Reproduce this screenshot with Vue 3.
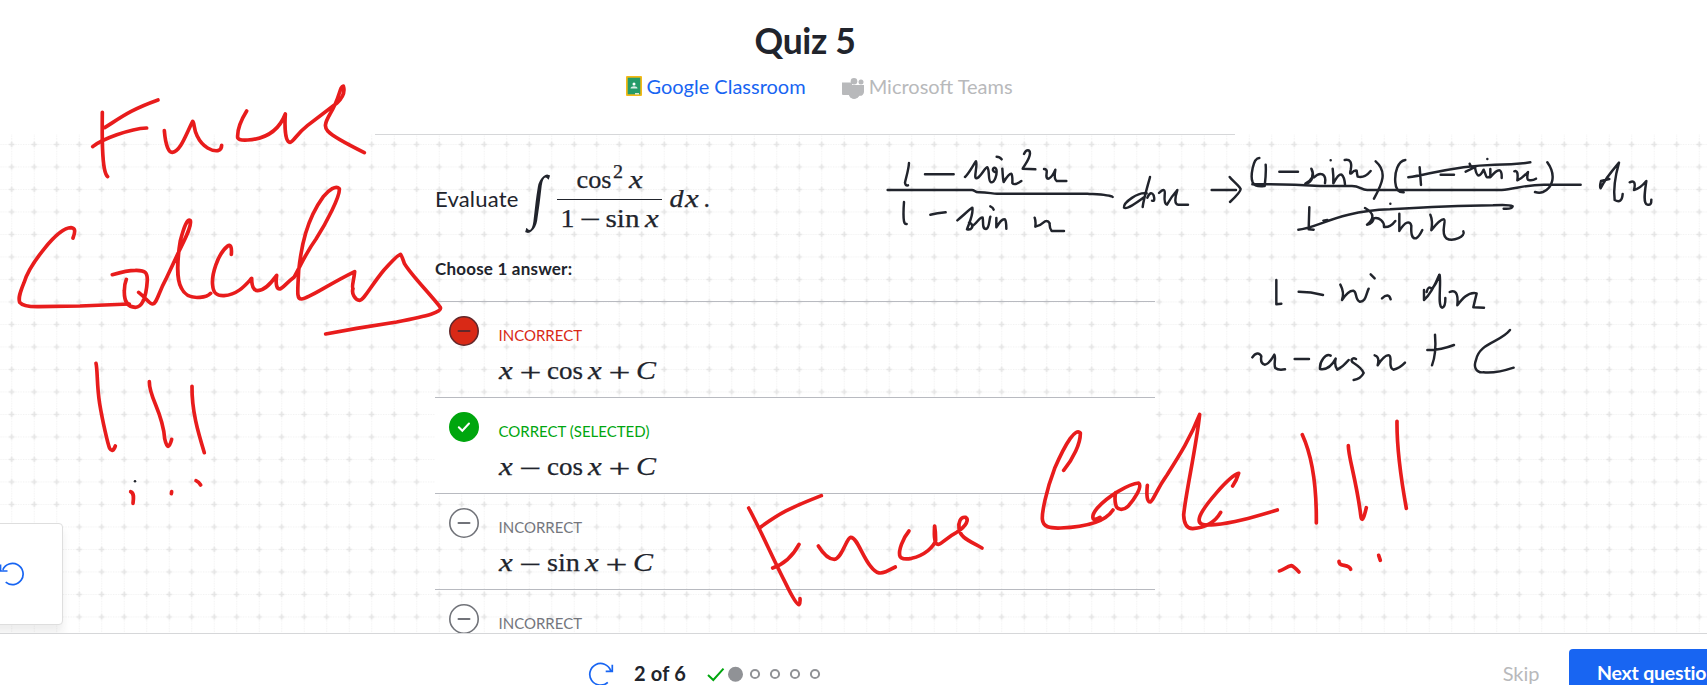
<script setup>
const x = (at, base, size = 26) => ({ t: 'x', at, w: size * 0.53, base, i: true, size })

const incorrect = 'INCORRECT'
const tail = (shift = 0) => [
  x(89 - shift, 25),
  { t: '+', at: 109.5 - shift, w: 22, base: 27 },
  { t: 'C', at: 137 - shift, w: 20, base: 25, i: true },
]
const answers = [
  {
    state: 'wrong',
    label: incorrect,
    terms: [x(0, 25), { t: '+', at: 20.5, w: 22, base: 27 }, { t: 'cos', at: 48, w: 36, base: 25 }, ...tail()],
  },
  {
    state: 'right',
    label: 'CORRECT (SELECTED)',
    terms: [x(0, 25), { t: '−', at: 20.5, w: 22, base: 27 }, { t: 'cos', at: 48, w: 36, base: 25 }, ...tail()],
  },
  {
    state: 'plain',
    label: incorrect,
    terms: [x(0, 25), { t: '−', at: 20.5, w: 22, base: 27 }, { t: 'sin', at: 48, w: 33, base: 25 }, ...tail(3)],
  },
  { state: 'plain', label: incorrect, terms: [] },
]

const integrand = [
  { t: 'cos', at: 51.5, w: 35, base: 28 },
  { t: '2', at: 88, w: 10, base: 18, size: 18 },
  x(104, 28),
  { t: '1', at: 35.5, w: 14, base: 67 },
  { t: '−', at: 55, w: 21, base: 68 },
  { t: 'sin', at: 80.5, w: 34, base: 67 },
  x(120, 67),
  { t: 'd', at: 144.5, w: 14, base: 46.5, i: true },
  x(160, 46.5),
  { t: '.', at: 178.5, w: 6.5, base: 46.5 },
]

const sketches = [
  {
    ink: 'red',
    move: 'translate(0 60) scale(.33333)',
    lines: [
      'M307 157C306 230 305 285 313 325Q317 345 323 350',
      'M314 203C365 171 390 150 474 120',
      'M278 260C305 238 390 206 440 204',
      'M493 212C497 260 507 278 517 277C542 274 559 220 578 184C584 188 580 207 592 229C608 263 638 274 653 272Q665 269 665 256',
      'M740 153C717 190 712 218 713 233Q717 242 743 240C810 236 842 198 856 162C853 210 857 246 870 247C880 246 888 224 922 197L1010 130C1030 112 1035 94 1030 78C1018 80 1021 112 990 162C974 190 972 202 984 214Q1000 232 1093 278',
      'M219 534C228 511 224 504 213 503C170 504 87 618 72 668C58 702 55 715 59 727Q70 741 117 740L240 738L388 732',
      'M337 644C375 633 396 631 406 631C438 630 442 640 442 660C438 725 421 742 406 742C381 741 372 721 373 692Q373 673 379 658M416 697C438 714 448 732 458 732C471 730 474 701 497 659L537 574C553 540 576 498 571 482C562 474 552 501 541 542C531 602 530 660 544 684C557 711 578 714 600 712Q622 711 632 700',
      'M694 583C696 560 691 552 683 558C652 583 634 646 638 676C640 700 650 708 672 707C715 704 739 672 755 655C755 680 760 692 773 692C798 692 818 662 830 646C826 676 831 688 840 687C849 684 858 670 882 652C902 617 915 583 948 537C979 489 1021 407 1018 386C1008 375 987 389 970 410C919 480 904 559 896 632C893 696 889 718 905 717C926 716 980 676 1064 635C1062 660 1054 680 1059 686C1054 700 1065 720 1079 721C1092 720 1113 677 1152 630Q1194 583 1202 583Q1204 584 1213 610C1230 641 1295 707 1321 742C1327 757 1284 767 1190 786L1070 805L977 822',
    ],
  },
  {
    ink: 'red',
    move: 'translate(0 340) scale(.33333)',
    lines: [
      'M288 70C293 90 290 135 299 191C307 240 324 315 329 325Q338 340 346 318',
      'M448 125C447 173 489 216 494 296Q504 341 515 298',
      'M576 139C575 212 594 276 613 338',
      'M392 455C403 459 401 474 399 490M515 455L514 461M588 422Q597 426 602 435',
    ],
  },
  { ink: 'dark', move: 'translate(0 340) scale(.33333)', lines: ['M405 424h.1'] },
  {
    ink: 'red',
    move: 'translate(720 400) scale(.33333)',
    lines: [
      'M86 324C126 398 159 478 197 550Q227 612 237 614Q241 609 240 596',
      'M118 384C180 339 207 325 304 287M158 504C196 491 220 465 237 433',
      'M295 438Q320 478 343 478C366 475 379 414 392 412C411 411 427 470 452 499C472 525 484 520 498 515L526 501',
      'M567 393C547 417 536 451 539 466Q542 481 575 475C614 466 642 440 647 421Q647 396 644 378C641 415 645 434 655 433C668 431 680 412 710 397C741 377 747 358 737 352C721 349 715 368 717 384C719 412 745 421 786 444',
    ],
  },
  {
    ink: 'red',
    move: 'translate(1020 390) scale(.33333)',
    lines: [
      'M131 241C160 205 182 159 181 129C167 113 139 155 104 235C77 306 66 367 67 387C69 412 90 415 122 414C201 411 258 392 279 360',
      'M240 382C213 400 213 376 232 354C263 319 327 281 356 279C369 291 340 331 325 348C310 363 290 361 287 343Q283 327 287 308',
      'M382 286C379 316 381 336 391 336C400 332 409 300 441 255C480 193 510 146 539 73C529 170 496 315 491 375C492 401 499 416 518 416C555 413 585 397 602 367',
      'M638 288Q650 271 656 250C628 258 544 355 538 385C534 404 548 407 584 404C643 399 701 381 772 360',
      'M847 134C876 197 890 289 889 399M985 167C985 201 1009 270 1022 374Q1026 410 1039 353M1131 94C1130 180 1150 305 1159 355',
      'M778 543C790 541 800 529 814 527Q820 528 837 546M957 514C955 532 987 520 992 538M1076 496L1081 511',
    ],
  },
  {
    ink: 'dark',
    move: 'translate(860 130) scale(.33333)',
    lines: [
      'M147 99C145 125 137 145 135 158Q136 168 144 166M195 133H281M410 80Q419 80 425 88',
      'M315 141C328 129 344 97 348 94C354 106 339 147 350 145C362 143 375 111 382 112C390 122 383 154 393 157C405 158 412 131 409 118C404 105 391 122 405 126M427 116Q429 151 431 156C440 141 447 130 454 131Q458 136 457 159Q463 168 484 153',
      'M492 72C499 57 510 58 510 71C508 91 493 105 488 116L526 118M552 117Q562 117 560 128Q557 148 566 146Q578 140 586 119Q581 147 590 153H619',
      'M83 180H336C345 180 344 188 358 187C383 187 397 191 411 191H682C710 193 751 194 758 201',
      'M132 216Q129 256 132 274Q134 284 140 282M211 254Q231 250 257 247M391 229Q399 232 401 239',
      'M292 271C310 256 331 236 337 233C341 253 328 277 321 298Q331 301 336 293C339 285 333 278 327 278M336 288C350 282 360 258 368 263C371 276 365 297 378 297C389 295 387 269 391 260M409 264V292C417 280 426 264 435 268Q439 274 439 296M524 263Q528 274 526 290Q542 286 555 274Q564 270 569 280Q568 294 575 303H612',
      'M860 190C835 185 790 217 792 233C800 240 829 219 852 202M870 141C864 165 851 205 848 231M862 203C870 186 876 187 881 196C884 207 884 215 876 212M897 189C911 175 916 177 914 196Q912 221 921 224Q934 200 952 180C944 204 943 223 955 224H984',
      'M1055 180H1128M1109 141C1118 153 1136 166 1142 177Q1142 186 1110 216',
    ],
  },
  {
    ink: 'dark',
    move: 'translate(1220 130) scale(.33333)',
    lines: [
      'M118 84C98 84 91 142 98 157Q105 171 132 168M137 104Q139 127 134 168M178 125H234M332 91h.1M467 94C503 125 487 160 462 206',
      'M256 161C269 154 287 141 274 116M278 128C283 143 269 159 259 160M282 142C301 123 320 132 315 160M338 116Q341 139 340 160Q356 130 365 134Q373 140 375 163M374 90C390 87 397 96 392 120Q388 134 394 130Q404 119 410 122Q411 132 413 140Q434 145 452 123',
      'M97 163H137C200 163 250 165 300 168H396C420 168 424 181 443 180H845C886 177 914 164 972 164H1082',
      'M556 90C534 93 523 126 526 158Q528 188 551 187M565 142C626 135 689 108 825 104Q882 104 931 97M599 112L603 165M662 134H702M802 87h.1',
      'M737 125L766 111Q752 114 749 101M765 113C771 145 780 141 791 119C800 139 797 145 808 141M811 117V142Q830 119 839 121Q846 124 845 144M883 124Q896 119 892 151Q907 145 924 126Q919 150 926 150Q937 153 948 146M982 97C1010 136 998 174 969 186Q958 190 945 186',
      'M1197 98C1174 125 1152 152 1142 175Q1138 171 1143 153L1168 147M1197 98C1188 130 1180 179 1184 210Q1206 222 1208 192M1229 157Q1250 147 1242 180Q1260 176 1279 153C1275 182 1268 220 1282 224Q1295 227 1294 209',
      'M235 299C288 297 352 243 510 238Q687 227 819 226C848 224 871 225 878 229Q875 238 851 236M268 232L266 298L281 299M310 272L322 270M511 221h.1',
      'M435 234C464 250 463 266 441 284Q459 281 461 265C477 260 494 276 492 291Q511 293 526 273M538 251V303C556 272 571 272 574 287C573 308 574 327 588 325Q597 321 607 300M631 254Q639 272 634 301Q661 266 672 268C680 271 660 309 679 325C699 337 739 319 730 304',
      'M169 450V523L184 521M236 485Q273 485 309 495M452 433L464 445',
      'M361 464Q374 488 366 510Q385 481 400 482C412 486 404 508 419 515C438 516 437 494 446 476M486 505Q506 487 512 508M612 480V510Q634 491 658 434Q650 462 635 477Q625 465 620 486M659 435C664 465 652 528 666 533Q677 531 676 504M689 486C704 479 716 486 712 526C724 510 744 484 770 490Q765 510 760 532L792 533',
      'M97 682C106 668 118 666 124 679Q120 700 134 704C149 702 156 684 163 674C169 683 160 704 166 714Q175 722 195 718M224 687H267M332 677C317 668 298 695 300 717Q328 722 347 686Q342 706 352 719Q369 710 386 690M408 687C398 681 388 691 401 699Q426 715 431 729Q422 747 401 750',
      'M464 676C478 679 476 695 473 706Q494 673 507 676C519 681 502 713 520 719Q538 716 555 698M645 614C648 650 646 680 636 706M622 660Q661 661 702 645M870 600C842 637 778 638 768 690C760 710 767 729 790 727C817 730 851 723 881 713',
    ],
  },
]
</script>

<template>
  <div class="page">
    <header class="head">
      <h1>Quiz 5</h1>
      <nav class="share">
        <a class="classroom">
          <svg width="16" height="20" viewBox="0 0 16 20">
            <rect width="16" height="20" rx="1" fill="#f4b916" />
            <rect x="1.7" y="1.7" width="12.6" height="16.6" fill="#259b69" />
            <circle cx="8" cy="8" r="1.5" fill="#fff" />
            <path d="M4.5 12.5c0-3 7-3 7 0z" fill="#d8eee5" />
            <rect x="9" y="17" width="4" height="1.5" fill="#dfe9cf" />
          </svg>
          <span>Google Classroom</span>
        </a>
        <a class="teams">
          <svg width="23" height="21" viewBox="0 0 23 21" fill="#b8b9bb">
            <circle cx="12" cy="3.3" r="3.3" />
            <circle cx="19" cy="4" r="2.5" />
            <path d="M0 4.5h10V7h12v7a4 4 0 0 1-4.5 3.8A6 6 0 0 1 7 17H1a1 1 0 0 1-1-1z" />
            <circle cx="12" cy="16" r="5" />
          </svg>
          <span>Microsoft Teams</span>
        </a>
      </nav>
    </header>

    <main class="work">
      <svg class="paper">
        <defs>
          <pattern id="grid" width="22.5" height="22.5" patternUnits="userSpaceOnUse" patternTransform="translate(.5 -.8)">
            <path d="M0 11.25H22.5M11.25 0V22.5" stroke="#f1f1f1" stroke-dasharray="1.25 1.25" />
            <path d="M8.5 11.25h5.5M11.25 8.5v5.5" stroke="#e4e4e4" stroke-width="1.7" />
          </pattern>
        </defs>
        <rect width="100%" height="100%" fill="url(#grid)" />
      </svg>

      <div class="column">
        <section class="exercise">
          <div class="question">
            <span>Evaluate</span>
            <svg class="math" width="190" height="78">
              <text class="integral" transform="translate(4.5 56.5) skewX(-7) scale(.88 1.1)" font-size="54">∫</text>
              <path d="M32 39.5H137" stroke="#21242c" stroke-width="1.2" />
              <text
                v-for="(m, k) in integrand" :key="k" :x="m.at" :y="m.base" :textLength="m.w"
                lengthAdjust="spacingAndGlyphs" :font-size="m.size || 26" :class="{ it: m.i }"
              >{{ m.t }}</text>
            </svg>
          </div>
          <p class="choose">Choose 1 answer:</p>
          <ul class="answers">
            <li v-for="(a, n) in answers" :key="n" :class="a.state">
              <svg class="mark" width="30" height="30" viewBox="0 0 30 30">
                <circle cx="15" cy="15" r="14.2" />
                <path v-if="a.state === 'right'" d="M9.8 15.2l3.5 3.6 6.7-7.3" />
                <path v-else d="M9.5 15h11" />
              </svg>
              <div>
                <span class="label">{{ a.label }}</span>
                <svg class="math" width="170" height="34">
                  <text
                    v-for="(m, k) in a.terms" :key="k" :x="m.at" :y="m.base" :textLength="m.w"
                    lengthAdjust="spacingAndGlyphs" :font-size="m.size || 26" :class="{ it: m.i }"
                  >{{ m.t }}</text>
                </svg>
              </div>
            </li>
          </ul>
        </section>
      </div>
      <aside class="tools">
        <svg width="30" height="30" viewBox="0 0 30 30">
          <path d="M6.8 10.8A10.6 10.6 0 1 1 9.7 23.2M4.5 5.5V12H11.5" />
        </svg>
      </aside>
    </main>

    <footer class="bar">
      <div class="progress">
        <svg class="again" width="26" height="24" viewBox="0 0 26 24">
          <path d="M19.8 20.3A10.8 10.8 0 1 1 22.7 8.5M24.3 2.8V9.3H17.7" />
        </svg>
        <b>2 of 6</b>
        <svg class="steps" width="120" height="20" viewBox="0 0 120 20">
          <path d="M1 11l5.3 5L16.5 4.7" />
          <circle class="now" cx="28.5" cy="10.3" r="7.5" />
          <circle v-for="n in 4" :key="n" :cx="28 + n * 20" cy="10" r="4.1" />
        </svg>
      </div>
      <div class="actions">
        <span class="skip">Skip</span>
        <button>Next question</button>
      </div>
    </footer>

    <svg class="ink" width="1707" height="685" viewBox="0 0 1707 685">
      <g v-for="(s, k) in sketches" :key="k" :class="s.ink" :transform="s.move">
        <path v-for="(d, n) in s.lines" :key="n" :d="d" />
      </g>
    </svg>
  </div>
</template>

<style>
body { background: #fff; overflow: hidden; }
</style>

<style scoped>
.page {
  position: relative;
  width: 1707px;
  height: 685px;
  overflow: hidden;
  display: flex;
  flex-direction: column;
  color: #21242c;
  font-family: Lato, sans-serif;
}
.head {
  flex: none;
  height: 134px;
  width: 860px;
  margin-left: 375px;
  display: flex;
  flex-direction: column;
  align-items: center;
}
h1 { margin: 19px 0 0; font-size: 35.5px; line-height: 44px; font-weight: 700; letter-spacing: -0.35px; }
.share { display: flex; gap: 36px; margin: 9px 0 0 29px; }
.share a { display: flex; font-size: 20px; line-height: 28px; gap: 4px; }
.share svg { margin-top: 4px; }
.classroom { color: #1865f2; }
.teams { color: #b8b9bb; }
.teams svg { margin-top: 6px; }
.work { flex: none; height: 499px; display: flex; position: relative; overflow: hidden; }
.paper { position: absolute; left: 0; top: 0; width: 100%; height: 100%; }
.column {
  position: relative;
  width: 860px;
  height: 560px;
  margin-left: 375px;
  padding: 0 80px 0 60px;
  box-sizing: border-box;
  border-top: 1px solid #d6d7d9;
}
.question { display: flex; align-items: flex-start; padding-top: 25px; height: 78px; }
.question span { font-size: 22px; line-height: 28px; margin-top: 25px; width: 90px; letter-spacing: 0.2px; }
.math {
  display: block;
  flex: none;
  overflow: visible;
  font-family: "Liberation Serif", serif;
  fill: #21242c;
  stroke: #21242c;
  stroke-width: 0.25;
}
.integral { stroke: none; }
.it { font-style: italic; }
.choose { margin: 19px 0 0; font-size: 17px; line-height: 24px; font-weight: 700; letter-spacing: 0.2px; }
.answers { list-style: none; margin: 20px 0 0; padding: 0; }
.answers li {
  display: flex;
  gap: 20px;
  height: 96.1px;
  box-sizing: border-box;
  border-top: 1px solid #b8bac0;
  padding: 14px 0 0 14px;
}
.label { display: block; font-size: 15px; line-height: 20px; margin: 9px 0 9px -0.5px; color: #74767d; }
.wrong .label { color: #d92916; }
.right .label { color: #00a60e; }
.right { background: #fff; }
.mark { fill: #fff; stroke: #717379; stroke-width: 1.6; }
.mark path { fill: none; stroke-width: 2; stroke-linecap: round; }
.wrong .mark { fill: #d92916; stroke: #62272a; }
.right .mark { fill: #00a60e; stroke: #00a60e; }
.right .mark path { stroke: #fff; }
.tools {
  position: absolute;
  left: -40px;
  top: 388.5px;
  width: 103px;
  height: 102px;
  box-sizing: border-box;
  border: 1px solid #dedede;
  border-radius: 4px;
  background: #fff;
  box-shadow: 0 8px 8px rgba(33, 36, 44, 0.08);
  display: flex;
  align-items: center;
  padding-left: 35px;
}
.tools path, .again path { fill: none; stroke: #1865f2; stroke-width: 1.7; }
.bar {
  flex: none;
  height: 52px;
  box-sizing: border-box;
  border-top: 1px solid #d6d7d9;
  background: #fff;
  display: flex;
  justify-content: space-between;
}
.progress { display: flex; margin: 28px 0 0 588px; }
.progress b { font-size: 20px; line-height: 24px; width: 73px; margin-left: 20px; margin-top: -1px; letter-spacing: 0.2px; }
.steps { margin-top: 2px; fill: none; }
.steps circle { stroke: #909296; stroke-width: 2; }
.steps .now { fill: #909296; stroke: none; }
.steps path { stroke: #00a60e; stroke-width: 2; }
.actions { display: flex; flex: none; margin-right: -30px; }
.skip { color: #b8b9bb; font-size: 20px; line-height: 24px; margin: 27px 29.5px 0 0; }
button {
  margin: 15px 0 0;
  width: 168px;
  height: 50px;
  padding: 0 0 3px 28px;
  text-align: left;
  border: 0;
  border-radius: 4px;
  background: #1865f2;
  color: #fff;
  font: 700 19.5px Lato, sans-serif;
  letter-spacing: -0.2px;
  white-space: nowrap;
}
.ink { position: absolute; left: 0; top: 0; fill: none; stroke-linecap: round; stroke-linejoin: round; }
.red { stroke: #e81c1c; stroke-width: 11; }
.dark { stroke: #21242c; stroke-width: 7.4; }
</style>
